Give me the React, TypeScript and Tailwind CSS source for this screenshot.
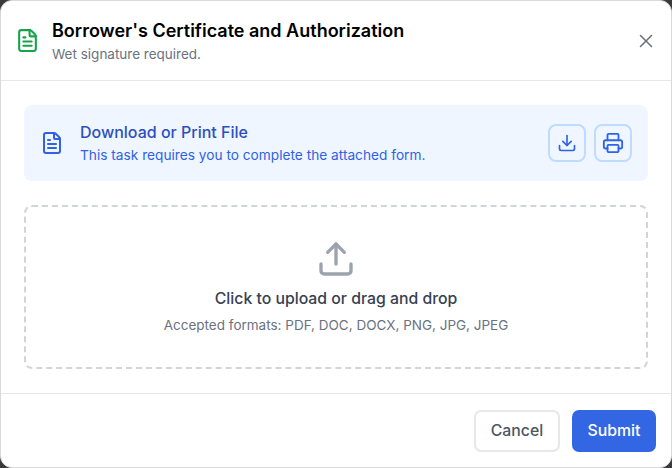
import { Download, FileText, Printer, Upload, X } from 'lucide-react'

export default function App() {
  return (
    <div className="w-[672px] h-[468px] bg-[#3a3a3a] font-['Inter',sans-serif]">
      <div className="flex flex-col h-full bg-white rounded-xl border border-[#d9d9dc] overflow-hidden">
        {/* Header */}
        <div className="flex items-center h-[80px] pl-[14px] pr-[14px] border-b border-[#e5e7eb] shrink-0">
          <FileText className="w-[25px] h-[25px] text-[#16a34a] mr-[12px]" strokeWidth={2} />
          <div className="flex-1">
            <h2 className="text-[18px] leading-[24px] font-semibold text-black">Borrower's Certificate and Authorization</h2>
            <p className="mt-[2px] text-[13.5px] leading-[18px] text-[#6b7280]">Wet signature required.</p>
          </div>
          <button className="text-[#6b7280]">
            <X className="w-[22px] h-[22px]" strokeWidth={1.7} />
          </button>
        </div>

        {/* Body */}
        <div className="flex-1 flex flex-col gap-[24px] px-[23px] pt-[24px]">
          <div className="flex items-center h-[76px] px-[16px] bg-[#eff6ff] rounded-lg">
            <FileText className="w-[24px] h-[24px] text-[#2f62e4] mr-[16px]" strokeWidth={2} />
            <div className="flex-1">
              <div className="text-[16px] leading-[20px] font-medium text-[#2d4fbd]">Download or Print File</div>
              <div className="mt-[4px] text-[13.7px] leading-[18px] text-[#2f62e4]">This task requires you to complete the attached form.</div>
            </div>
            <div className="flex gap-[8px]">
              <button className="flex items-center justify-center w-[38px] h-[38px] border-2 border-[#bfdbfe] rounded-lg text-[#2f62e4]">
                <Download className="w-[20px] h-[20px]" strokeWidth={2} />
              </button>
              <button className="flex items-center justify-center w-[38px] h-[38px] border-2 border-[#bfdbfe] rounded-lg text-[#2f62e4]">
                <Printer className="w-[22px] h-[22px]" strokeWidth={2} />
              </button>
            </div>
          </div>

          <div className="flex flex-col items-center h-[164px] pt-[32px] border-2 border-dashed border-[#d1d5db] rounded-lg">
            <Upload className="w-[40px] h-[40px] text-[#9ca3af]" strokeWidth={2} />
            <div className="mt-[10px] text-[15.8px] leading-[20px] font-medium text-[#374151]">Click to upload or drag and drop</div>
            <div className="mt-[7px] text-[13.5px] leading-[18px] text-[#6b7280]">Accepted formats: PDF, DOC, DOCX, PNG, JPG, JPEG</div>
          </div>
        </div>

        {/* Footer */}
        <div className="flex justify-end items-center gap-[12px] h-[74px] pr-[15px] border-t border-[#e5e7eb] shrink-0">
          <button className="w-[86px] h-[42px] bg-white border-2 border-[#e5e7eb] rounded-[7px] text-[15.8px] font-medium text-[#4b5563]">Cancel</button>
          <button className="w-[84px] h-[42px] bg-[#3366e3] rounded-[7px] text-[15.8px] font-medium text-white">Submit</button>
        </div>
      </div>
    </div>
  )
}
